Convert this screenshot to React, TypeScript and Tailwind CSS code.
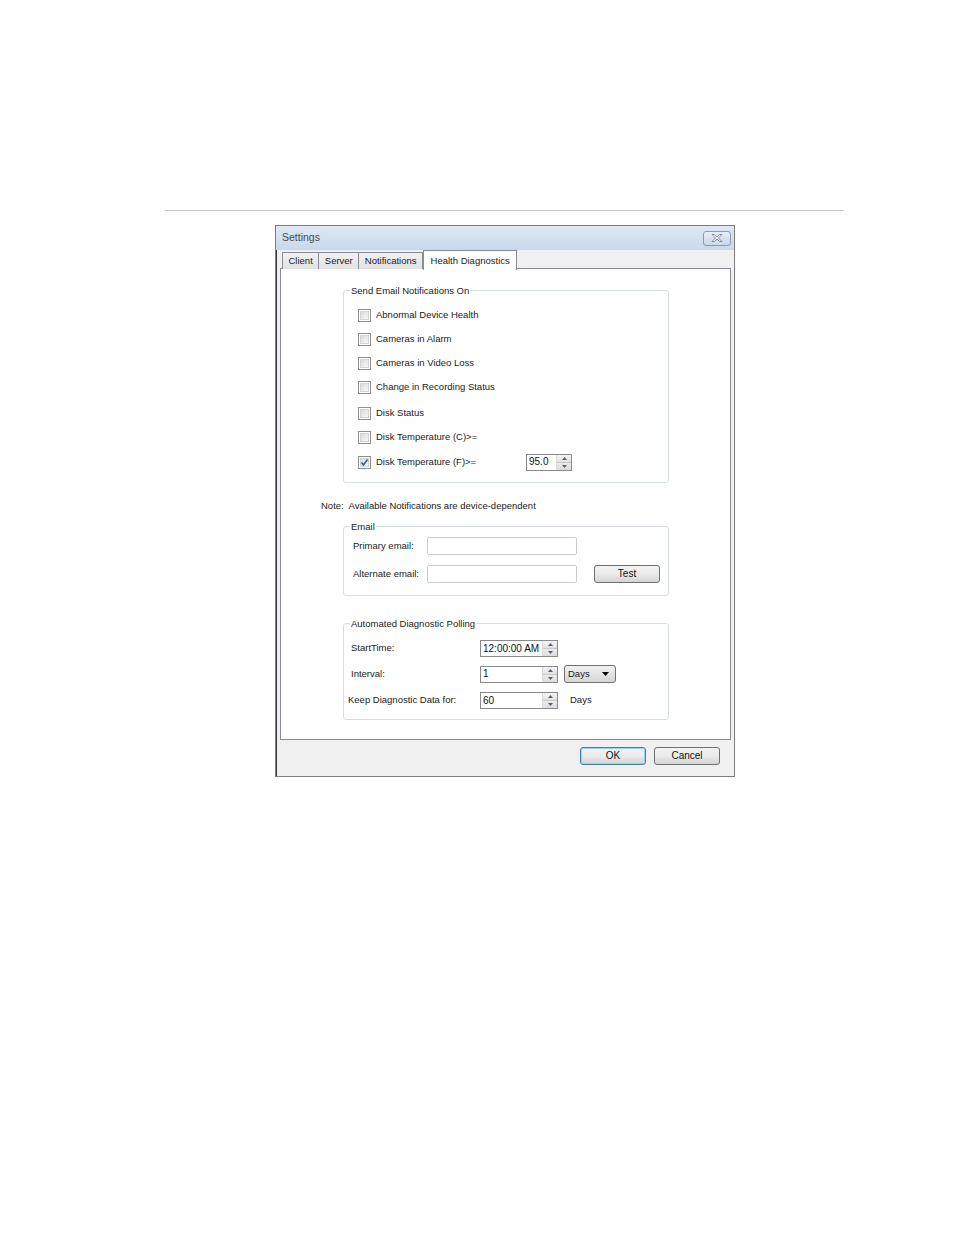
import React from "react";

const font = { fontFamily: '"Liberation Sans", Arial, sans-serif' };

const notifications = [
  { label: "Abnormal Device Health", checked: false, gap: "mt-0" },
  { label: "Cameras in Alarm", checked: false, gap: "mt-0" },
  { label: "Cameras in Video Loss", checked: false, gap: "mt-0" },
  { label: "Change in Recording Status", checked: false, gap: "mt-0" },
  { label: "Disk Status", checked: false, gap: "mt-[2px]" },
  { label: "Disk Temperature (C)>=", checked: false, gap: "mt-0" },
  { label: "Disk Temperature (F)>=", checked: true, gap: "mt-[1px]" },
];

function Checkbox({ checked }: { checked: boolean }) {
  return (
    <span className="relative w-[13px] h-[13px] border border-[#8e8f8f] bg-white p-px shrink-0">
      <span className="block w-full h-full border border-[#d4d4d4] bg-gradient-to-br from-[#dadada] to-[#f7f7f7]" />
      {checked && (
        <svg className="absolute left-[1px] top-[1px]" width="9" height="9" viewBox="0 0 9 9">
          <path d="M1.5 4.5 L3.5 7 L7.5 1.5" fill="none" stroke="#3b5699" strokeWidth="1.6" />
        </svg>
      )}
    </span>
  );
}

function SpinButtons() {
  return (
    <div className="w-[15px] h-full flex flex-col border-l border-[#d9d9d9]">
      <div className="flex-1 flex items-center justify-center bg-gradient-to-b from-[#f4f4f4] to-[#e2e2e2] border-b border-[#c8c8c8]">
        <svg width="5" height="3" viewBox="0 0 5 3">
          <path d="M0 3 L2.5 0 L5 3 Z" fill="#4d6185" />
        </svg>
      </div>
      <div className="flex-1 flex items-center justify-center bg-gradient-to-b from-[#ececec] to-[#dcdcdc]">
        <svg width="5" height="3" viewBox="0 0 5 3">
          <path d="M0 0 L5 0 L2.5 3 Z" fill="#4d6185" />
        </svg>
      </div>
    </div>
  );
}

function Spinner({ value, width, height }: { value: string; width: string; height: string }) {
  return (
    <div className={`flex ${width} ${height} border border-[#8a8a8a] bg-white`}>
      <div className="flex-1 pl-[2px] leading-none flex items-center text-[10px] text-[#111]">{value}</div>
      <SpinButtons />
    </div>
  );
}

function Group({
  legend,
  className,
  children,
}: {
  legend: string;
  className: string;
  children: React.ReactNode;
}) {
  return (
    <div className={`relative ml-[62px] w-[326px] border border-[#d5dfe5] rounded-[3px] ${className}`}>
      <span className="absolute left-[6px] top-[-7px] bg-white px-[1px] leading-[13px] text-[#222]">
        {legend}
      </span>
      {children}
    </div>
  );
}

function WinButton({ label, primary }: { label: string; primary?: boolean }) {
  return (
    <button
      className={`w-[66px] h-[18px] rounded-[3px] border ${
        primary ? "border-[#3c7fb1] shadow-[inset_0_0_0_1px_#9ad2f2]" : "border-[#707070]"
      } bg-gradient-to-b from-[#f2f2f2] via-[#ebebeb] to-[#d4d4d4] text-[10px] leading-none text-[#111]`}
    >
      {label}
    </button>
  );
}

export default function App() {
  return (
    <div className="w-[954px] h-[1235px] bg-white pt-[210px] text-[9.5px]" style={font}>
      <div className="ml-[165px] w-[679px] h-px bg-[#c6c6c6]" />

      <div className="mt-[14px] ml-[275px] w-[460px] h-[552px] border border-[#7d7d7d] bg-[#f0f0f0] flex flex-col shadow-[inset_1px_1px_0_#3a3a3a]">
        {/* title bar */}
        <div className="h-[24px] flex items-center justify-between pl-[6px] pr-[3px] bg-gradient-to-b from-[#dfe9f5] to-[#c8d8eb]">
          <span className="text-[10.5px] text-[#4a4a4a]">Settings</span>
          <div className="w-[28px] h-[15px] rounded-[3px] border border-[#8a9bb4] bg-gradient-to-b from-[#e6edf6] to-[#cbd8e8] flex items-center justify-center">
            <svg width="12" height="8" viewBox="0 0 12 8">
              <path
                d="M1 0.5 H3.5 L6 3 L8.5 0.5 H11 L7.5 4 L11 7.5 H8.5 L6 5 L3.5 7.5 H1 L4.5 4 Z"
                fill="#f4f6f9"
                stroke="#6f7a88"
                strokeWidth="0.8"
              />
            </svg>
          </div>
        </div>

        {/* tabs */}
        <div className="pl-[6px] h-[19px] flex items-end relative z-10">
          {["Client", "Server", "Notifications"].map((t) => (
            <div
              key={t}
              className="h-[17px] px-[5.5px] -mr-px border border-b-0 border-[#898c95] bg-gradient-to-b from-[#f2f2f2] to-[#e1e1e1] flex items-center text-[#222]"
            >
              {t}
            </div>
          ))}
          <div className="h-[20px] -mb-px ml-[1px] px-[6.5px] border border-b-0 border-[#898c95] bg-white flex items-start pt-[3px] text-[#222]">
            Health Diagnostics
          </div>
        </div>

        {/* panel */}
        <div className="ml-[4px] w-[451px] h-[472px] -mt-px border border-[#898c95] bg-white text-[#1a1a1a]">
          <Group legend="Send Email Notifications On" className="mt-[21px] h-[193px] pt-[12px] pl-[14px]">
            {notifications.map((n) => (
              <div key={n.label} className={`h-[24px] flex items-center ${n.gap}`}>
                <Checkbox checked={n.checked} />
                <span className="ml-[5px] w-[150px]">{n.label}</span>
                {n.checked && <Spinner value="95.0" width="w-[46px]" height="h-[17px]" />}
              </div>
            ))}
          </Group>

          <div className="mt-[16px] ml-[40px] leading-[13px]">
            Note:&nbsp; Available Notifications are device-dependent
          </div>

          <Group legend="Email" className="mt-[14px] h-[70px] pt-[10px] pl-[9px]">
            <div className="h-[18px] flex items-center">
              <span className="w-[74px]">Primary email:</span>
              <div className="w-[150px] h-[18px] border border-[#c7ccd3] rounded-[2px] bg-white" />
            </div>
            <div className="mt-[10px] h-[18px] flex items-center">
              <span className="w-[74px]">Alternate email:</span>
              <div className="w-[150px] h-[18px] border border-[#c7ccd3] rounded-[2px] bg-white" />
              <div className="ml-[17px]">
                <WinButton label="Test" />
              </div>
            </div>
          </Group>

          <Group legend="Automated Diagnostic Polling" className="mt-[27px] h-[97px] pt-[16px]">
            <div className="h-[17px] flex items-center pl-[7px]">
              <span className="w-[129px]">StartTime:</span>
              <Spinner value="12:00:00 AM" width="w-[78px]" height="h-[17px]" />
            </div>
            <div className="mt-[8px] h-[18px] flex items-center pl-[7px]">
              <span className="w-[129px]">Interval:</span>
              <Spinner value="1" width="w-[78px]" height="h-[17px]" />
              <div className="ml-[6px] w-[52px] h-[18px] rounded-[3px] border border-[#707070] bg-gradient-to-b from-[#f2f2f2] to-[#d6d6d6] flex items-center justify-between pl-[3px] pr-[6px]">
                <span>Days</span>
                <svg width="7" height="4" viewBox="0 0 7 4">
                  <path d="M0 0 H7 L3.5 4 Z" fill="#000" />
                </svg>
              </div>
            </div>
            <div className="mt-[9px] h-[17px] flex items-center pl-[4px]">
              <span className="w-[132px]">Keep Diagnostic Data for:</span>
              <Spinner value="60" width="w-[78px]" height="h-[17px]" />
              <span className="ml-[12px]">Days</span>
            </div>
          </Group>
        </div>

        {/* bottom buttons */}
        <div className="flex justify-end gap-[8px] pr-[14px] pt-[7px]">
          <WinButton label="OK" primary />
          <WinButton label="Cancel" />
        </div>
      </div>
    </div>
  );
}
